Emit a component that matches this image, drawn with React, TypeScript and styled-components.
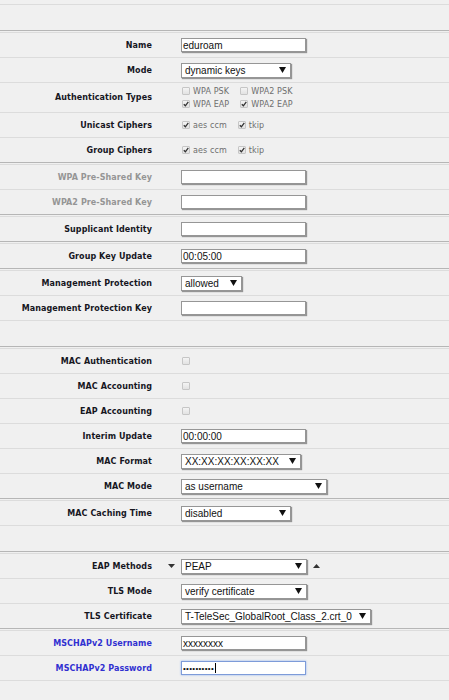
import React from "react";
import styled, { createGlobalStyle } from "styled-components";

const GlobalStyle = createGlobalStyle`
  html, body {
    margin: 0;
    padding: 0;
    background: #f0f0f0;
  }
  body {
    font-family: "DejaVu Sans", Verdana, sans-serif;
  }
`;

const Page = styled.div`
  width: 449px;
  height: 700px;
  overflow: hidden;
  box-sizing: border-box;
  padding-top: 4px;
  background: #f0f0f0;
`;

const Spacer = styled.div`
  height: 25px;
  border-top: 1px solid #dcdcdc;
`;

const Section = styled.div`
  border-top: 1px solid #b6b6b6;
  padding-top: 1px;
`;

const Row = styled.div<{ $tall?: boolean }>`
  display: grid;
  grid-template-columns: 152px 1fr;
  column-gap: 29px;
  align-items: center;
  height: ${(p) => (p.$tall ? 29 : 24)}px;
  border-top: 1px solid #dcdcdc;
`;

const labelColors = {
  normal: "#16161e",
  muted: "#959595",
  link: "#3030d0",
};

const Label = styled.div<{ $tone?: keyof typeof labelColors }>`
  text-align: right;
  white-space: nowrap;
  font-family: "DejaVu Sans", Verdana, sans-serif;
  font-size: 8px;
  font-weight: bold;
  letter-spacing: 0.08px;
  color: ${(p) => labelColors[p.$tone ?? "normal"]};
`;

const Control = styled.div`
  display: flex;
  align-items: center;
`;

const TextBox = styled.div<{ $focus?: boolean }>`
  box-sizing: border-box;
  width: 125px;
  height: 14px;
  padding: 0 1px;
  display: flex;
  align-items: center;
  background: #fff;
  border: 1px solid ${(p) => (p.$focus ? "#7d9bd9" : "#969696")};
  box-shadow: ${(p) =>
    p.$focus ? "0 0 2px #8fb0ee" : "1px 1px 1px #959595"};
  font-family: "Liberation Sans", Arial, sans-serif;
  font-size: 10px;
  color: #111;
  white-space: nowrap;
  overflow: hidden;
`;

const Dots = styled.span`
  font-family: "Liberation Sans", Arial, sans-serif;
  font-size: 8px;
  letter-spacing: 0.3px;
  color: #111;
`;

const Caret = styled.span`
  display: inline-block;
  width: 1px;
  height: 10px;
  margin-left: 1px;
  background: #000;
`;

const Select = styled.div<{ $w: number }>`
  box-sizing: border-box;
  width: ${(p) => p.$w}px;
  height: 15px;
  padding: 0 4px 0 3px;
  display: flex;
  align-items: center;
  justify-content: space-between;
  background: #fff;
  border: 1px solid #969696;
  box-shadow: 1px 1px 1px #959595;
  font-family: "Liberation Sans", Arial, sans-serif;
  font-size: 10px;
  color: #111;
  white-space: nowrap;
`;

const Toggle = styled.span<{ $side: "left" | "right" }>`
  display: flex;
  width: 7px;
  margin-left: ${(p) => (p.$side === "left" ? "-13px" : "6px")};
  margin-right: ${(p) => (p.$side === "left" ? "6px" : "0")};
`;

const CheckGrid = styled.div<{ $cols?: number }>`
  display: grid;
  grid-template-columns: repeat(${(p) => p.$cols ?? 2}, auto);
  justify-content: start;
  column-gap: 11px;
  row-gap: 3px;
  margin-left: 1px;
`;

const CheckItem = styled.label`
  display: flex;
  align-items: center;
  gap: 3px;
  height: 10px;
  font-family: "DejaVu Sans", Verdana, sans-serif;
  font-size: 8px;
  letter-spacing: 0.1px;
  color: #6e6e6e;
  white-space: nowrap;
`;

const Box = styled.span`
  box-sizing: border-box;
  width: 8px;
  height: 8px;
  display: flex;
  align-items: center;
  justify-content: center;
  border: 1px solid #c6c6c6;
  border-radius: 1px;
  background: linear-gradient(#f4f4f4, #e2e2e2);
`;

function Arrow({ up }: { up?: boolean }) {
  return (
    <svg width="7" height="6" viewBox="0 0 7 6">
      <polygon points={up ? "0,6 7,6 3.5,0" : "0,0 7,0 3.5,6"} fill="#111" />
    </svg>
  );
}

function SmallArrow({ up }: { up?: boolean }) {
  return (
    <svg width="7" height="4" viewBox="0 0 7 4">
      <polygon points={up ? "0,4 7,4 3.5,0" : "0,0 7,0 3.5,4"} fill="#333" />
    </svg>
  );
}

function Check({ on }: { on?: boolean }) {
  return (
    <Box>
      {on && (
        <svg width="6" height="6" viewBox="0 0 6 6">
          <path d="M0.8 3.2 L2.4 4.8 L5.3 0.9" stroke="#333" strokeWidth="1.3" fill="none" />
        </svg>
      )}
    </Box>
  );
}

function Dropdown({ w, value }: { w: number; value: string }) {
  return (
    <Select $w={w}>
      <span>{value}</span>
      <Arrow />
    </Select>
  );
}

export default function App() {
  return (
    <>
      <GlobalStyle />
      <Page>
        <Spacer />

        <Section>
          <Row>
            <Label>Name</Label>
            <Control>
              <TextBox>eduroam</TextBox>
            </Control>
          </Row>
          <Row>
            <Label>Mode</Label>
            <Control>
              <Dropdown w={110} value="dynamic keys" />
            </Control>
          </Row>
          <Row $tall>
            <Label>Authentication Types</Label>
            <Control>
              <CheckGrid>
                <CheckItem><Check />WPA PSK</CheckItem>
                <CheckItem><Check />WPA2 PSK</CheckItem>
                <CheckItem><Check on />WPA EAP</CheckItem>
                <CheckItem><Check on />WPA2 EAP</CheckItem>
              </CheckGrid>
            </Control>
          </Row>
          <Row>
            <Label>Unicast Ciphers</Label>
            <Control>
              <CheckGrid>
                <CheckItem><Check on />aes ccm</CheckItem>
                <CheckItem><Check on />tkip</CheckItem>
              </CheckGrid>
            </Control>
          </Row>
          <Row>
            <Label>Group Ciphers</Label>
            <Control>
              <CheckGrid>
                <CheckItem><Check on />aes ccm</CheckItem>
                <CheckItem><Check on />tkip</CheckItem>
              </CheckGrid>
            </Control>
          </Row>
        </Section>

        <Section>
          <Row>
            <Label $tone="muted">WPA Pre-Shared Key</Label>
            <Control>
              <TextBox />
            </Control>
          </Row>
          <Row>
            <Label $tone="muted">WPA2 Pre-Shared Key</Label>
            <Control>
              <TextBox />
            </Control>
          </Row>
        </Section>

        <Section>
          <Row>
            <Label>Supplicant Identity</Label>
            <Control>
              <TextBox />
            </Control>
          </Row>
        </Section>

        <Section>
          <Row>
            <Label>Group Key Update</Label>
            <Control>
              <TextBox>00:05:00</TextBox>
            </Control>
          </Row>
        </Section>

        <Section>
          <Row>
            <Label>Management Protection</Label>
            <Control>
              <Dropdown w={61} value="allowed" />
            </Control>
          </Row>
          <Row>
            <Label>Management Protection Key</Label>
            <Control>
              <TextBox />
            </Control>
          </Row>
          <Spacer />
        </Section>

        <Section>
          <Row>
            <Label>MAC Authentication</Label>
            <Control>
              <CheckGrid><Check /></CheckGrid>
            </Control>
          </Row>
          <Row>
            <Label>MAC Accounting</Label>
            <Control>
              <CheckGrid><Check /></CheckGrid>
            </Control>
          </Row>
          <Row>
            <Label>EAP Accounting</Label>
            <Control>
              <CheckGrid><Check /></CheckGrid>
            </Control>
          </Row>
          <Row>
            <Label>Interim Update</Label>
            <Control>
              <TextBox>00:00:00</TextBox>
            </Control>
          </Row>
          <Row>
            <Label>MAC Format</Label>
            <Control>
              <Dropdown w={120} value="XX:XX:XX:XX:XX:XX" />
            </Control>
          </Row>
          <Row>
            <Label>MAC Mode</Label>
            <Control>
              <Dropdown w={146} value="as username" />
            </Control>
          </Row>
        </Section>

        <Section>
          <Row>
            <Label>MAC Caching Time</Label>
            <Control>
              <Dropdown w={110} value="disabled" />
            </Control>
          </Row>
          <Spacer />
        </Section>

        <Section>
          <Row>
            <Label>EAP Methods</Label>
            <Control>
              <Toggle $side="left"><SmallArrow /></Toggle>
              <Dropdown w={126} value="PEAP" />
              <Toggle $side="right"><SmallArrow up /></Toggle>
            </Control>
          </Row>
          <Row>
            <Label>TLS Mode</Label>
            <Control>
              <Dropdown w={126} value="verify certificate" />
            </Control>
          </Row>
          <Row>
            <Label>TLS Certificate</Label>
            <Control>
              <Dropdown w={190} value="T-TeleSec_GlobalRoot_Class_2.crt_0" />
            </Control>
          </Row>
        </Section>

        <Section>
          <Row>
            <Label $tone="link">MSCHAPv2 Username</Label>
            <Control>
              <TextBox>xxxxxxxx</TextBox>
            </Control>
          </Row>
          <Row>
            <Label $tone="link">MSCHAPv2 Password</Label>
            <Control>
              <TextBox $focus>
                <Dots>••••••••••</Dots>
                <Caret />
              </TextBox>
            </Control>
          </Row>
          <Spacer />
        </Section>
      </Page>
    </>
  );
}
